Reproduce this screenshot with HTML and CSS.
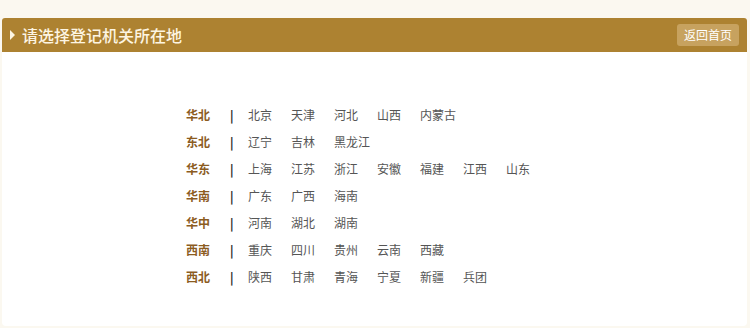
FILE: index.html
```html
<!DOCTYPE html>
<html lang="zh-CN">
<head>
<meta charset="utf-8">
<title>请选择登记机关所在地</title>
<link rel="stylesheet" href="styles.css">
</head>
<body>
<div class="panel">
  <div class="panel-head">
    <div class="title"><span class="arrow"></span>请选择登记机关所在地</div>
    <a class="back" href="#">返回首页</a>
  </div>
  <div class="panel-body">
    <div class="regions">
      <div class="row"><span class="area">华北</span><span class="sep">|</span><a>北京</a><a>天津</a><a>河北</a><a>山西</a><a>内蒙古</a></div>
      <div class="row"><span class="area">东北</span><span class="sep">|</span><a>辽宁</a><a>吉林</a><a>黑龙江</a></div>
      <div class="row"><span class="area">华东</span><span class="sep">|</span><a>上海</a><a>江苏</a><a>浙江</a><a>安徽</a><a>福建</a><a>江西</a><a>山东</a></div>
      <div class="row"><span class="area">华南</span><span class="sep">|</span><a>广东</a><a>广西</a><a>海南</a></div>
      <div class="row"><span class="area">华中</span><span class="sep">|</span><a>河南</a><a>湖北</a><a>湖南</a></div>
      <div class="row"><span class="area">西南</span><span class="sep">|</span><a>重庆</a><a>四川</a><a>贵州</a><a>云南</a><a>西藏</a></div>
      <div class="row"><span class="area">西北</span><span class="sep">|</span><a>陕西</a><a>甘肃</a><a>青海</a><a>宁夏</a><a>新疆</a><a>兵团</a></div>
    </div>
  </div>
</div>
</body>
</html>
```
FILE: styles.css
```css
html, body {
  margin: 0;
  padding: 0;
  background: #fbf8f0;
  font-family: "Noto Sans CJK SC", "Noto Sans", sans-serif;
}
.panel {
  margin: 18px 3px 0 2px;
}
.panel-head {
  height: 34px;
  background: #ad8231;
  border-radius: 3px 3px 0 0;
  display: flex;
  align-items: center;
  justify-content: space-between;
  padding: 0 8px 0 8px;
}
.title {
  display: flex;
  align-items: center;
  color: #fdf5e2;
  font-size: 16px;
  line-height: 20px;
  font-weight: 500;
}
.arrow {
  width: 0;
  height: 0;
  border-top: 5px solid transparent;
  border-bottom: 5px solid transparent;
  border-left: 5px solid #fdf5e2;
  margin-right: 7px;
}
.back {
  background: #c7a25f;
  color: #fff;
  font-size: 12px;
  line-height: 22px;
  height: 22px;
  padding: 0 7px;
  border-radius: 3px;
  text-decoration: none;
}
.panel-body {
  background: #fff;
  height: 274px;
  border-radius: 0 0 4px 4px;
  box-sizing: border-box;
  padding: 49px 0 0 184px;
}
.row {
  display: flex;
  align-items: center;
  height: 27px;
  font-size: 12px;
}
.area {
  width: 44px;
  color: #8c5c1f;
  font-weight: bold;
}
.sep {
  color: #222;
  width: 18px;
  font-weight: bold;
}
.row a {
  color: #555;
  width: 43px;
  white-space: nowrap;
}
```
